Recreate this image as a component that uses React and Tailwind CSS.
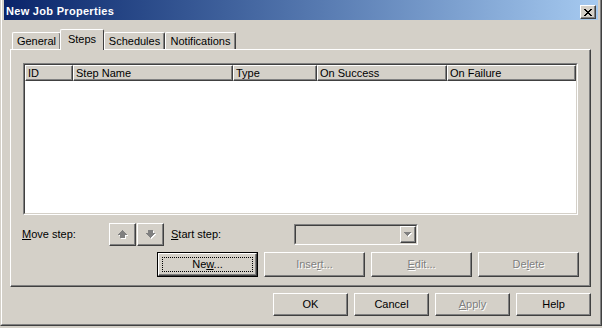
import React from 'react'

const font = "font-['Liberation_Sans',Arial,sans-serif]"
const raised = 'border border-white border-r-[#404040] border-b-[#404040] shadow-[inset_-1px_-1px_0_#808080]'
const dim = 'text-[#808080] [text-shadow:1px_1px_0_#ffffff]'

const columns = [
    { name: 'ID', w: 'w-[48px]' },
    { name: 'Step Name', w: 'w-[160px]' },
    { name: 'Type', w: 'w-[84px]' },
    { name: 'On Success', w: 'w-[130px]' },
    { name: 'On Failure', w: 'w-[129px]' },
]

// pixel rows for the block arrow, top to bottom: [x, width]
const upRows = [[4, 1], [3, 3], [2, 5], [1, 7], [0, 9], [2, 5], [2, 5], [2, 5]]

const Arrow = ({ down }) => {
    const rows = down ? [...upRows].reverse() : upRows
    return (
        <svg width="10" height="9" viewBox="0 0 10 9" shapeRendering="crispEdges">
            {rows.map(([x, w], i) => <rect key={'s' + i} x={x + 1} y={i + 1} width={w} height="1" fill="#ffffff" />)}
            {rows.map(([x, w], i) => <rect key={'a' + i} x={x} y={i} width={w} height="1" fill="#808080" />)}
        </svg>
    )
}

const CloseGlyph = () => {
    const rows = [[[0, 2], [6, 2]], [[1, 2], [5, 2]], [[2, 4]], [[3, 2]], [[2, 4]], [[1, 2], [5, 2]], [[0, 2], [6, 2]]]
    return (
        <svg width="8" height="7" viewBox="0 0 8 7" shapeRendering="crispEdges">
            {rows.map((r, y) => r.map(([x, w]) => <rect key={y + '-' + x} x={x} y={y} width={w} height="1" fill="#000" />))}
        </svg>
    )
}

const Btn = ({ children, disabled, isDefault, className = '' }) => {
    if (isDefault) {
        return (
            <div className={`border border-black ${className}`}>
                <div className={`relative h-full flex items-center justify-center ${raised}`}>
                    <div className="absolute inset-[3px] border border-dotted border-black" />
                    <span>{children}</span>
                </div>
            </div>
        )
    }
    return (
        <div className={`flex items-center justify-center ${raised} ${disabled ? dim : 'text-black'} ${className}`}>
            <span>{children}</span>
        </div>
    )
}

const Tab = ({ label, active, w }) => active ? (
    <div className={`${w} h-[21px] relative z-10 bg-[#d4d0c8] border-l border-t border-r border-white border-r-[#404040] rounded-t-[2px] flex items-center justify-center pb-[2px] -ml-[1px]`}>
        {label}
    </div>
) : (
    <div className={`${w} h-[17px] mb-[1px] border-l border-t border-r border-white border-r-[#404040] rounded-t-[2px] shadow-[inset_-1px_0_0_#808080] flex items-center justify-center`}>
        {label}
    </div>
)

export default function App() {
    return (
        <div className={`w-[602px] h-[328px] bg-[#d4d0c8] overflow-hidden text-[11px] leading-none text-black ${font}`}>
            <div className="w-[602px] h-[326px] border-l border-r border-b border-[#d4d0c8] border-r-[#404040] border-b-[#404040]">
                <div className="h-full border-l border-r border-b border-white border-r-[#808080] border-b-[#808080] px-[2px] pb-[2px] flex flex-col">

                    <header className="h-[20px] flex items-start justify-between bg-gradient-to-r from-[#0a246a] to-[#a6caf0] pl-[2px] pr-[2px]">
                        <span className="text-white font-bold text-[11px] tracking-[0.3px] mt-[6px]">New Job Properties</span>
                        <div className={`w-[16px] h-[14px] mt-[5px] bg-[#d4d0c8] flex items-center justify-center ${raised}`}>
                            <CloseGlyph />
                        </div>
                    </header>

                    <div className="flex items-end h-[21px] mt-[9px] ml-[6px] pl-[2px]">
                        <Tab label="General" w="w-[49px]" />
                        <Tab label="Steps" w="w-[44px]" active />
                        <Tab label="Schedules" w="w-[61px]" />
                        <Tab label="Notifications" w="w-[71px]" />
                    </div>

                    <div className="w-[581px] h-[238px] -mt-[1px] ml-[6px] border border-white border-r-[#404040] border-b-[#404040] shadow-[inset_-1px_-1px_0_#808080] pt-[13px] pl-[12px]">

                        <div className="w-[555px] h-[152px] border border-[#808080] border-r-white border-b-white">
                            <div className="h-full border border-[#404040] border-r-[#d4d0c8] border-b-[#d4d0c8] bg-white">
                                <div className="flex h-[16px] bg-[#d4d0c8]">
                                    {columns.map(c => (
                                        <div key={c.name} className={`${c.w} shrink-0 flex items-center pl-[2px] ${raised}`}>
                                            {c.name}
                                        </div>
                                    ))}
                                </div>
                            </div>
                        </div>

                        <div className="flex items-center h-[23px] mt-[8px] -ml-[1px]">
                            <span className="w-[87px]"><u>M</u>ove step:</span>
                            <div className={`w-[27px] h-[23px] flex items-center justify-center ${raised}`}><Arrow /></div>
                            <div className={`w-[27px] h-[23px] ml-[1px] flex items-center justify-center ${raised}`}><Arrow down /></div>
                            <span className="w-[123px] ml-[7px]"><u>S</u>tart step:</span>
                            <div className="w-[124px] h-[21px] border border-[#808080] border-r-white border-b-white">
                                <div className="h-full border border-[#404040] border-r-[#d4d0c8] border-b-[#d4d0c8] flex justify-end">
                                    <div className={`w-[16px] h-full flex items-center justify-center ${raised}`}>
                                        <svg width="8" height="5" viewBox="0 0 8 5" shapeRendering="crispEdges">
                                            {[[0, 7], [1, 5], [2, 3], [3, 1]].map(([x, w], i) => <rect key={'s' + i} x={x + 1} y={i + 1} width={w} height="1" fill="#fff" />)}
                                            {[[0, 7], [1, 5], [2, 3], [3, 1]].map(([x, w], i) => <rect key={i} x={x} y={i} width={w} height="1" fill="#808080" />)}
                                        </svg>
                                    </div>
                                </div>
                            </div>
                        </div>

                        <div className="flex justify-end gap-[6px] h-[25px] mt-[6px] pr-[11px]">
                            <Btn isDefault className="w-[101px]">Ne<u>w</u>...</Btn>
                            <Btn disabled className="w-[101px]">Inse<u>r</u>t...</Btn>
                            <Btn disabled className="w-[101px]"><u>E</u>dit...</Btn>
                            <Btn disabled className="w-[101px]">De<u>l</u>ete</Btn>
                        </div>
                    </div>

                    <div className="flex justify-end gap-[6px] h-[23px] mt-[6px] pr-[7px]">
                        <Btn className="w-[75px]">OK</Btn>
                        <Btn className="w-[75px]">Cancel</Btn>
                        <Btn disabled className="w-[75px]"><u>A</u>pply</Btn>
                        <Btn className="w-[75px]">Help</Btn>
                    </div>
                </div>
            </div>
        </div>
    )
}
